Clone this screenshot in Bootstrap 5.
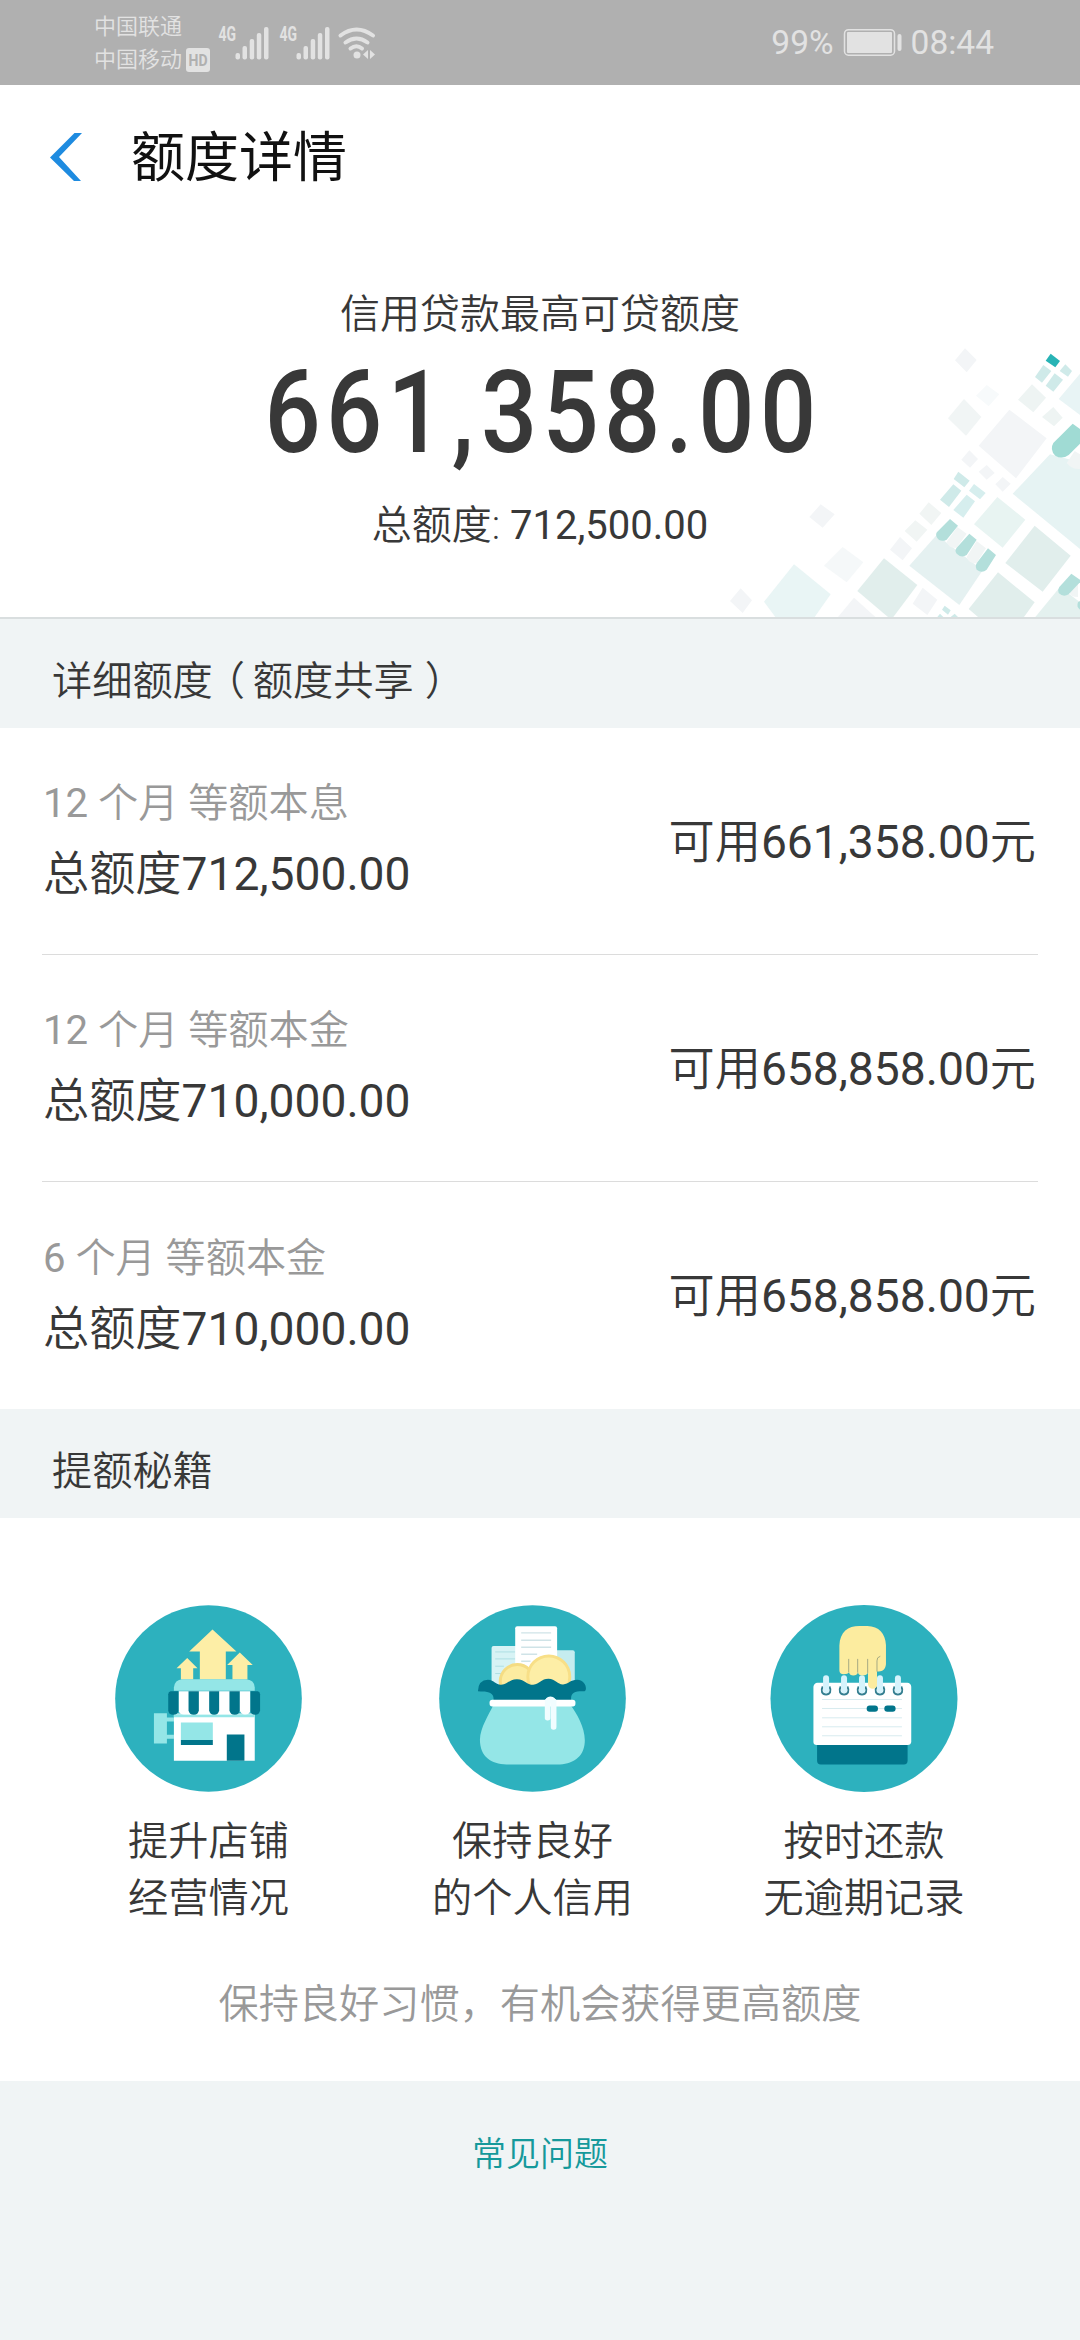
<!DOCTYPE html>
<html lang="zh-CN">
<head>
<meta charset="utf-8">
<meta name="viewport" content="width=device-width, initial-scale=1">
<title>额度详情</title>
<link href="https://cdn.jsdelivr.net/npm/bootstrap@5.3.0/dist/css/bootstrap.min.css" rel="stylesheet">
<style>
  body { font-family: Roboto, "Noto Sans CJK SC", sans-serif; font-weight: 350; font-size: 40.2px; line-height: 60px; color: #383838; background: #f0f4f5; }
  .num { font-weight: 400; }
  .status-bar { height: 85px; background: #b0b0b0; color: #e2e2e2; padding: 0 86px 0 94px; }
  .carriers { font-size: 22px; line-height: 33px; padding-top: 10px; width: 124px; }
  .status-right { font-size: 33.5px; line-height: 86px; font-weight: 400; }
  .battery { margin: 0 8px 0 9px; }
  .title-bar { height: 144px; padding-left: 50px; }
  .title-bar h1 { font-size: 54px; font-weight: 400; line-height: 80px; color: #111; margin-left: 49px; padding-top: 3px; }
  .hero { height: 390px; border-bottom: 2px solid #d9dedf; padding-top: 56px; font-size: 40px; }
  .hero-art { right: 0; bottom: 0; }
  .big-amount { font-size: 115px; line-height: 116px; font-weight: 500; letter-spacing: 6.2px; margin-top: 10px; margin-right: -6px; transform: scaleX(.86); }
  .comma { margin-left: 3px; margin-right: 2px; }
  .total-line { margin-top: 25px; }
  .section-title { padding: 0 52px; height: 109px; font-size: 40.2px; line-height: 126px; font-weight: 350; background: #f0f4f5; }
  .paren-l, .paren-r { font-feature-settings: "halt"; }
  .paren-l { margin: 0 8px 0 12px; }
  .paren-r { margin-left: 11px; }
  .quota { margin: 0 42px; padding: 1px 2px 0 1px; height: 227px; }
  .quota:first-child { height: 226px; }
  .quota:last-child { height: 228px; }
  .quota + .quota { border-top: 1px solid #dcdcdc; }
  .quota .term { color: #999; }
  .quota .sum, .quota .avail { font-size: 46.2px; line-height: 70px; }
  .quota .sum { margin-top: 5px; }
  .tips { height: 563px; padding-top: 87px; }
  .tips-row { padding-left: 46px; }
  .tip-shop { width: 325px; }
  .tip-purse { width: 323px; }
  .tip-calendar { width: 340px; }
  .tip-item { line-height: 57px; }
  .tip-item svg { margin-bottom: 21px; }
  .note { color: #999; margin-top: 48px; }
  .faq { font-size: 34px; line-height: 50px; color: #15999b; padding-top: 48px; }
</style>
</head>
<body>

<header class="status-bar d-flex justify-content-between">
  <div class="d-flex">
    <div class="carriers">
      <div>中国联通</div>
      <div class="d-flex align-items-center">中国移动
        <svg class="ms-1" width="24" height="24" viewBox="0 0 24 24"><rect width="24" height="24" rx="3" fill="#e2e2e2"/><text x="12" y="17.5" text-anchor="middle" font-size="16" font-weight="700" textLength="19" lengthAdjust="spacingAndGlyphs" fill="#b0b0b0">HD</text></svg>
      </div>
    </div>
    <svg width="162" height="85" viewBox="218 0 162 85" fill="#e2e2e2">
      <g id="sim">
        <text x="218.500" y="41" font-size="19.500" font-weight="700" textLength="17.500" lengthAdjust="spacingAndGlyphs">4G</text>
        <rect x="235.500" y="53" width="4.500" height="6.500" rx="2"/><rect x="242.500" y="46" width="4.500" height="13.500" rx="2"/><rect x="249.700" y="39" width="4.500" height="20.500" rx="2"/><rect x="256.800" y="33" width="4.500" height="26.500" rx="2"/><rect x="264" y="27" width="4.500" height="32.500" rx="2"/>
      </g>
      <use href="#sim" x="61"/>
      <g fill="none" stroke="#e2e2e2" stroke-width="4" stroke-linecap="round"><path d="M340.500 35.500Q356.500 23.500 373 35.500"/><path d="M345.500 42.500Q356.500 34.500 367.500 42.500"/><path d="M350.500 48.500Q356.500 44 362 48.500"/></g>
      <circle cx="357" cy="55" r="3.500"/><path d="M368 50v9l-5-4.500zM370 59V50l5 4.500z"/>
    </svg>
  </div>
  <div class="status-right d-flex align-items-center">
    <span>99%</span>
    <svg class="battery" width="60" height="85" viewBox="0 0 60 85"><rect x="1.500" y="29.700" width="50" height="25.500" rx="4" fill="none" stroke="#e2e2e2" stroke-width="1.500"/><rect x="4" y="32" width="45" height="21" rx="1" fill="#e2e2e2"/><rect x="54.500" y="34" width="4" height="17" rx="2" fill="#e2e2e2"/></svg>
    <span>08:44</span>
  </div>
</header>

<main class="bg-white">
  <div class="title-bar d-flex align-items-center">
    <svg width="32" height="48" viewBox="0 0 32 48"><path d="M32 0H24.500L0 24.500 24 48H31L9 24z" fill="#1e8be0"/></svg>
    <h1 class="mb-0">额度详情</h1>
  </div>

  <section class="hero position-relative text-center">
    <svg class="hero-art position-absolute" width="360" height="288" viewBox="0 0 1080 864">
      <g fill="#f3f5f7">
        <path d="M735 58 770 93 740 130 705 94z"/><path d="M800 168 838 196 806 232 768 200z" fill="#f7fafb"/>
        <path d="M732 210 784 264 738 320 684 268z" fill="#f1f5f5"/><path d="M868 242 980 328 888 448 776 350z"/>
        <path d="M748 364 774 390 750 416 724 392z"/><path d="M800 408 824 432 800 452 776 428z"/><path d="M848 444 872 464 848 488 826 466z"/>
        <path d="M302 526 344 556 308 596 268 564z"/><path d="M368 654 430 700 380 760 312 710z" fill="#f5f8f9"/>
        <path d="M62 778 96 814 68 852 30 816z"/><path d="M540 624 576 658 548 694 510 662z"/>
        <path d="M586 574 622 602 590 638 554 606z" fill="#f1f5f4"/><path d="M626 520 664 552 634 588 598 554z" fill="#f1f5f4"/>
        <path d="M402 806 466 864H354z"/><path d="M608 776 652 812 622 858 578 824z"/>
        <path d="M936 166 978 206 940 250 894 212z" fill="#eef4f3"/><path d="M1000 234 1028 266 1002 292 966 264z" fill="#eef4f3"/>
        <path d="M1080 376V422Q1060 422 1040 410z"/>
      </g>
      <path d="M222 706 332 796 284 864H166L132 818z" fill="#e9f5f5"/>
      <path d="M492 688 592 768 520 864H504L412 786z" fill="#e1eeec"/>
      <path d="M650 618 788 724 718 828 568 710z" fill="#e5f1f1"/>
      <path d="M832 504 916 572 848 656 762 586z" fill="#e8f4f2"/>
      <path d="M944 590 1052 680 968 788 856 702z" fill="#e1eeec"/>
      <path d="M834 730 944 820 912 864H774L746 840z" fill="#e1eeec"/>
      <path d="M990 376 1080 400V660L878 494z" fill="#e6f3f3"/>
      <path d="M1080 134V258L1016 210z" fill="#e8f4f5"/>
      <path d="M1020 774 1080 820V864H946z" fill="#e4f1ef"/>
      <g fill="#f1f5f5"><path d="M712 594 740 614 710 656Q688 660 680 638z"/><path d="M770 636 798 658 770 702Q748 706 740 684z"/><path d="M1080 376V420Q1056 422 1040 402L1064 366z"/><path d="M1074 758V804Q1050 804 1046 788z"/></g>
      <g fill="#b3dfdb"><path d="M690 570 714 590 680 632Q660 642 650 624 646 614 652 608z"/><path d="M748 614 770 632 740 678Q724 688 710 674 702 664 712 654z"/><path d="M804 658 828 678 800 722Q786 734 770 722 764 710 772 700z"/><path d="M1054 734 1080 752V760L1046 796Q1030 806 1016 792 1012 782 1018 774z"/><path d="M1080 816V842Q1068 834 1074 820z"/></g>
      <path d="M1058 284 1080 300V344L1046 378Q1026 392 1006 380 988 362 1000 342z" fill="#a0dbd4"/>
      <path d="M992 74 1020 96 1006 115 977 95z" fill="#28b3b5"/>
      <g fill="#cfeae9"><path d="M970 108 994 126 966 161 945 144z"/><path d="M1004 133 1029 152 1000 188 977 170z"/><path d="M1036 106 1056 126 1044 143 1019 126z"/>
      <path d="M715 428 749 455 733 475 701 450z"/><path d="M700 466 724 485 687 534 660 512z"/><path d="M762 465 797 492 780 511 747 485z" fill="#d6eeee"/><path d="M740 497 765 517 730 566 700 543z" fill="#d6eeee"/>
      <path d="M674 830 692 844 684 857 666 842z"/><path d="M660 854 670 864H652zM704 854 714 864H692z"/></g>
    </svg>
    <div class="position-relative">
      <div>信用贷款最高可贷额度</div>
      <div class="big-amount">661<span class="comma">,</span>358.00</div>
      <div class="total-line">总额度: <span class="num">712,500.00</span></div>
    </div>
  </section>

  <h2 class="section-title mb-0">详细额度<span class="paren-l">（</span>额度共享<span class="paren-r">）</span></h2>

  <section>
    <div class="quota d-flex justify-content-between align-items-center">
      <div><div class="term"><span class="num">12</span> 个月 等额本息</div><div class="sum">总额度<span class="num">712,500.00</span></div></div>
      <div class="avail">可用<span class="num">661,358.00</span>元</div>
    </div>
    <div class="quota d-flex justify-content-between align-items-center">
      <div><div class="term"><span class="num">12</span> 个月 等额本金</div><div class="sum">总额度<span class="num">710,000.00</span></div></div>
      <div class="avail">可用<span class="num">658,858.00</span>元</div>
    </div>
    <div class="quota d-flex justify-content-between align-items-center">
      <div><div class="term"><span class="num">6</span> 个月 等额本金</div><div class="sum">总额度<span class="num">710,000.00</span></div></div>
      <div class="avail">可用<span class="num">658,858.00</span>元</div>
    </div>
  </section>

  <h2 class="section-title mb-0">提额秘籍</h2>

  <section class="tips text-center">
    <div class="tips-row d-flex">
      <div class="tip-item tip-shop">
        <svg class="d-block mx-auto" width="187" height="187" viewBox="45 44 562 562">
          <circle cx="326" cy="325" r="280.500" fill="#2db1be"/>
          <g fill="#fdeea6"><path d="M338 118 410 184H378V268H300V184H268z"/><path d="M262 203 293 234H280V268H243V234H230z"/><path d="M420 187 459 224H443V268H398V224H382z"/></g>
          <path d="M222 302V292Q224 268 248 267H438Q464 268 465 292V302z" fill="#94e6e7"/>
          <path d="M162 369H201V382H222V394H201V434H222V446H201V460H162z" fill="#94e6e7"/>
          <path d="M222 370H465V512H222z" fill="#fff"/><path d="M222 372H465V381H222z" fill="#94e6e7"/>
          <path d="M236 303H452V362Q450 373 436 373 424 373 420 362 416 373 404 373H252Q238 373 236 362z" fill="#fff"/>
          <g fill="#01758b"><path d="M212 303H236V360Q234 374 220 374 206 374 205 360V312Q205 304 212 303z"/><path d="M266 303H297V360Q295 374 282 374 268 374 266 360z"/><path d="M328 303H358V360Q356 374 343 374 330 374 328 360z"/><path d="M389 303H420V360Q418 374 405 374 391 374 389 360z"/><path d="M452 303H474Q481 304 481 312V360Q479 374 466 374 453 374 452 360z"/></g>
          <path d="M243 397H339V451H243z" fill="#94e6e7"/><path d="M243 450H339V465H243zM381 433H434V512H381z" fill="#01758b"/>
        </svg>
        提升店铺<br>经营情况
      </div>
      <div class="tip-item tip-purse">
        <svg class="d-block mx-auto" width="187" height="187" viewBox="45 44 562 562">
          <circle cx="326" cy="325" r="280.500" fill="#2db1be"/>
          <rect x="203" y="167" width="90" height="125" rx="6" fill="#d7f3f5"/><rect x="380" y="180" width="73" height="110" rx="6" fill="#c5ecef"/>
          <path d="M214 185H275M214 206H275M214 228H240M214 250H232" stroke="#aedfe3" stroke-width="3"/>
          <rect x="274" y="108" width="126" height="130" rx="6" fill="#fff"/><path d="M292 128H382M292 150H382M292 171H382M292 192H340M292 213H320" stroke="#cfe3e7" stroke-width="4"/>
          <circle cx="280" cy="274" r="51" fill="#fceca0" stroke="#f5dc83" stroke-width="9"/><circle cx="375" cy="260" r="63" fill="#fdeea6" stroke="#f8df87" stroke-width="9"/>
          <path d="M162 303Q163 270 192 269C212 270 216 285 232 284 254 281 258 266 280 267 304 268 308 284 328 284 348 282 352 266 374 266 396 267 402 284 418 283 436 281 440 269 460 269 490 271 490 303 482 303 454 302 440 306 442 330H209C211 309 196 303 170 304z" fill="#01758b"/>
          <path d="M208 345H441C459 371 486 414 483 457 480 503 444 523 401 523H248C202 522 168 500 168 448 169 412 195 373 208 345z" fill="#94e6e7"/>
          <rect x="197" y="329" width="258" height="20" rx="8" fill="#fff"/>
          <g fill="#f1fdff"><rect x="381" y="325" width="17" height="94" rx="8"/><rect x="363" y="325" width="17" height="66" rx="8"/><path d="M363 340Q363 319 380 319T397 340z"/></g>
        </svg>
        保持良好<br>的个人信用
      </div>
      <div class="tip-item tip-calendar">
        <svg class="d-block mx-auto" width="188" height="187" viewBox="48 44 564 562">
          <circle cx="330" cy="325" r="281" fill="#2db1be"/>
          <path d="M189 455H461V512Q461 523 450 523H200Q189 523 189 512z" fill="#01758b"/>
          <path d="M190 278H460Q471 279 472 290V456Q471 465 461 465H188Q178 465 178 456V290Q180 279 190 278z" fill="#fff"/>
          <path d="M204 328H444M204 355H444M204 383H444M204 410H444M204 437H444" stroke="#d7ebef" stroke-width="3"/>
          <g fill="none" stroke="#347f91" stroke-width="6"><path id="ring" d="M206 289C199 302 204 313 216 313S233 302 226 289"/><use href="#ring" x="54"/><use href="#ring" x="108"/><use href="#ring" x="162"/><use href="#ring" x="216"/></g>
          <g fill="#d5f3fc"><rect x="207" y="255" width="18" height="54" rx="9"/><rect x="261" y="255" width="18" height="54" rx="9"/><rect x="315" y="255" width="18" height="54" rx="9"/><rect x="369" y="255" width="18" height="54" rx="9"/><rect x="423" y="255" width="18" height="54" rx="9"/></g>
          <path d="M256 166C258 124 282 107 316 107H340C375 108 394 129 396 164V222C394 239 383 246 369 243V286Q367 296 356 296T342 284V247Q339 256 326 256T312 246Q309 256 298 256T285 246Q282 252 269 252T256 240z" fill="#fcec9f"/>
          <path d="M284 206V246M311 206V247M341 206V248M379 198Q368 201 369 212V244" stroke="#a6aa83" stroke-width="3" fill="none"/>
          <rect x="338" y="346" width="34" height="19" rx="9" fill="#01758b"/><rect x="391" y="346" width="34" height="19" rx="9" fill="#01758b"/>
        </svg>
        按时还款<br>无逾期记录
      </div>
    </div>
    <p class="note mb-0">保持良好习惯，有机会获得更高额度</p>
  </section>
</main>

<footer class="faq text-center">常见问题</footer>

<script src="https://cdn.jsdelivr.net/npm/bootstrap@5.3.0/dist/js/bootstrap.bundle.min.js"></script>
</body>
</html>
